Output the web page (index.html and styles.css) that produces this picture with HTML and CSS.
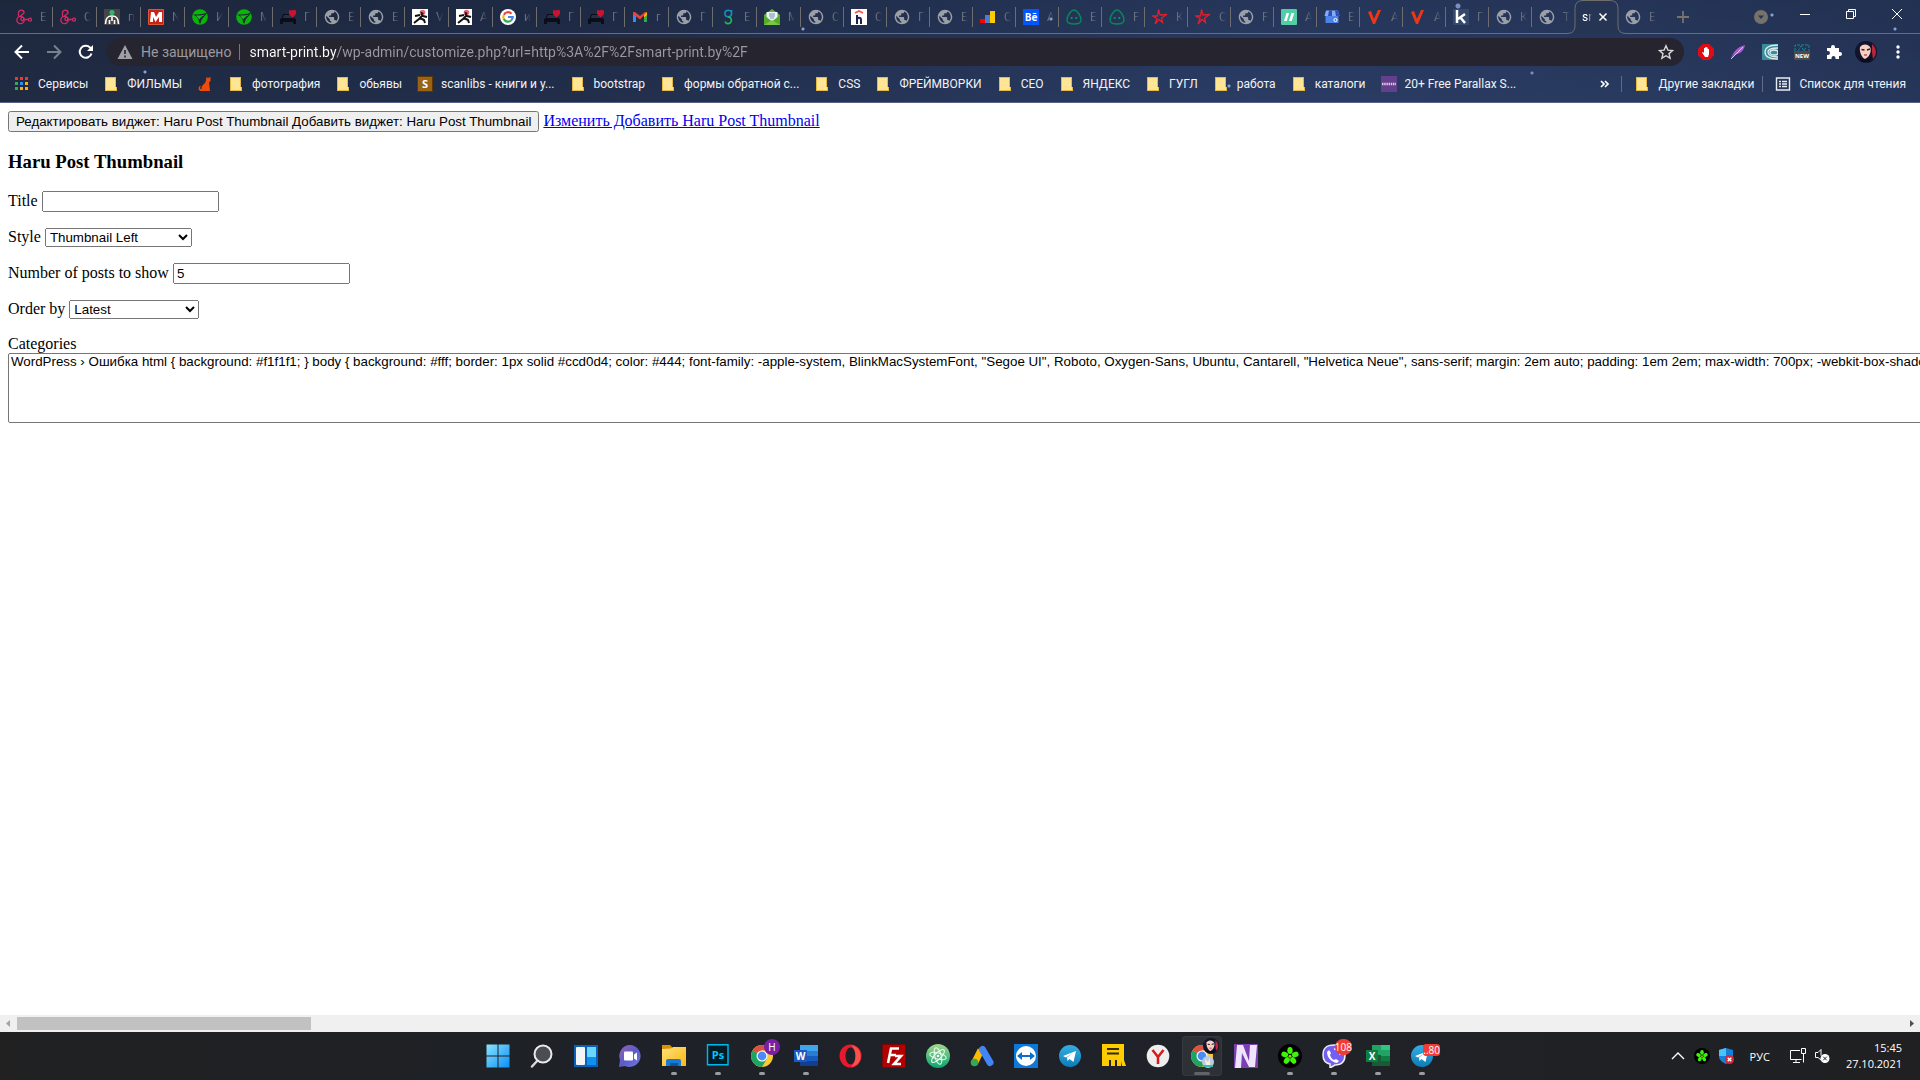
FILE: index.html
```html
<!DOCTYPE html>
<html lang="ru">
<head>
    <meta charset="UTF-8">
    <meta name="viewport" content="width=device-width, initial-scale=1.0">
    <title>smart-print.by</title>
    <link rel="stylesheet" href="styles.css">
</head>
<body>
    <!-- Shared icons -->
    <svg class="defs" aria-hidden="true">
        <linearGradient id="win-g" x2="1" y2="1"><stop stop-color="#8be3ff"/><stop offset="1" stop-color="#0a8ff5"/></linearGradient>
        <linearGradient id="chat-g" x2="1" y2="1"><stop stop-color="#9565b0"/><stop offset=".5" stop-color="#5b5bc8"/><stop offset="1" stop-color="#6f7be8"/></linearGradient>
        <linearGradient id="fold-g" x2="1" y2="1"><stop stop-color="#ffe07a"/><stop offset="1" stop-color="#fcb814"/></linearGradient>
        <linearGradient id="tg-g" x2="0" y2="1"><stop stop-color="#37aee2"/><stop offset="1" stop-color="#0b7cb8"/></linearGradient>
        <linearGradient id="atom-g" x2="0" y2="1"><stop stop-color="#a3d68a"/><stop offset="1" stop-color="#0aa572"/></linearGradient>
        <symbol id="globe" viewBox="1 1 22 22"><path d="M12 2C6.480 2 2 6.480 2 12s4.480 10 10 10 10-4.480 10-10S17.520 2 12 2zm-1 17.930c-3.950-.49-7-3.850-7-7.930 0-.62.08-1.210.21-1.790L9 15v1c0 1.100.9 2 2 2v1.930zm6.900-2.540c-.26-.81-1-1.390-1.900-1.390h-1v-3c0-.55-.45-1-1-1H8v-2h2c.55 0 1-.45 1-1V7h2c1.100 0 2-.9 2-2v-.41c2.930 1.190 5 4.060 5 7.410 0 2.080-.8 3.970-2.100 5.390z" fill="#9ba0a8"/></symbol>
        <symbol id="key" viewBox="0 0 16 16"><g fill="none" stroke="#d12b63" stroke-width="1.3"><circle cx="4.500" cy="11" r="3.700"/><circle cx="6.500" cy="10" r="1.600"/><path d="M2.500 7.500V4a2.800 2.800 0 0 1 5.600 0L4 7.500M7 10.500h6"/><circle cx="14" cy="10.700" r="1.500"/></g></symbol>
        <symbol id="head" viewBox="0 0 16 16"><path fill="#454545" d="M0 0h16v16H0z"/><path d="M1.500 15c0-6 2-8 6.500-8s6.500 2 6.500 8M5.500 15v-4m5 4v-4M8 12V8" fill="none" stroke="#fff" stroke-width="1.600"/><circle cx="8" cy="3.500" r="2.500" fill="#2fb66a"/></symbol>
        <symbol id="letter-m" viewBox="0 0 16 16"><path fill="#c7231b" stroke="#e0542f" d="M.5.5h15v15H.5z"/><path d="M2 13h3V8l2.500 5L11 8v5h3V3h-3L8 8 6 3H3z" fill="#fff"/></symbol>
        <symbol id="leaf" viewBox="0 0 16 16"><circle cx="8" cy="8" r="7.800" fill="#0ab40a"/><path d="M1 5.500c5 0 9 0 14-2-2 5-5 4-6.500 11L7 14c0-4-1-6-6-8.500z" fill="#1d2a2e"/><path d="M4 6.500c4 0 6 0 9-1-3 2-4 2-5.500 5z" fill="#14c414"/></symbol>
        <symbol id="car" viewBox="0 0 16 16"><path d="M0 15v-5l2-1 1-4h9l2 4 2 1v5h-3v-2H3v2z" fill="#0c0e17"/><path d="M4 6h7l1 3H3z" fill="#24304c"/><path d="M9 1l2.500.6L14 .8l2 .7v3.500L12.500 9 9 5z" fill="#cb1230"/></symbol>
        <symbol id="ninja" viewBox="0 0 16 16"><path fill="#fff" d="M0 0h16v16H0z"/><circle cx="10.500" cy="3.500" r="2.800" fill="#f06472"/><path d="M8 2.500l4 1.500-2 1.500z" fill="#111"/><path d="M9 5l2 2 4 1M10 7L7 10l-5 4M8 9l4 2 1 3M8 6L3 7" fill="none" stroke="#111" stroke-width="2"/></symbol>
        <symbol id="google" viewBox="0 0 16 16"><circle cx="8" cy="8" r="8" fill="#fff"/><g fill="none" stroke-width="2.200"><path d="M11.500 4.700A4.700 4.700 0 0 0 3.900 5.800" stroke="#ea4335"/><path d="M3.900 5.700a4.700 4.700 0 0 0 0 4.600" stroke="#fbbc05"/><path d="M3.800 10.100a4.700 4.700 0 0 0 7.300 1.400" stroke="#34a853"/><path d="M8 8h4.700a4.600 4.600 0 0 1-1.600 3.500" stroke="#4285f4"/></g></symbol>
        <symbol id="gmail" viewBox="0 0 16 16"><path d="M1 13V4h3v9z" fill="#4285f4"/><path d="M12 13V4h3v9z" fill="#34a853"/><path d="M12 4l3-1v3l-3 2.500z" fill="#fbbc04"/><path d="M1 3l2 0 5 4 5-4h2L8 10.500 1 5z" fill="#ea4335"/></symbol>
        <symbol id="eight" viewBox="0 0 16 16"><g fill="none" stroke-width="1.600"><path d="M11.500 1v3.500A3.300 3.300 0 1 1 8.200 1.200q2 0 3.300 1.300" stroke="#1492c8"/><path d="M8 8a3.300 3.300 0 1 1-3 4.500" stroke="#1fbf4a"/></g></symbol>
        <symbol id="mail" viewBox="0 0 16 16"><path d="M0 6l8-6 8 6v10H0z" fill="#62b332"/><path d="M2.500 3h11v6L8 13 2.500 9z" fill="#eef3f5"/><path d="M5 5h6M5 7h6M6 9h4" stroke="#6d8fae"/><path d="M0 6l8 6.500L16 6v10H0z" fill="#55ab2c"/><path d="M0 16l8-5 8 5z" fill="#7cc640"/></symbol>
        <symbol id="hh" viewBox="0 0 16 16"><path fill="#fff" d="M0 0h16v16H0z"/><path d="M4 4l4-2 4 2" stroke="#ff4c4c" stroke-width="1.600" fill="none"/><path d="M6 6v9M6 11c0-3 4-3 4 0v4" stroke="#1b2450" stroke-width="2" fill="none"/></symbol>
        <symbol id="bars" viewBox="0 0 16 16"><path d="M0 10h5v4H0z" fill="#f00"/><path d="M5 6h5v8H5z" fill="#4c7ed0"/><path d="M10 2h5v12h-5z" fill="#fc0"/></symbol>
        <symbol id="alien" viewBox="0 0 16 16"><path d="M8 1C5 1 1 7 1 11c0 3 3 4 7 4s7-1 7-4C15 7 11 1 8 1z" fill="none" stroke="#08875a" stroke-width="1.400"/><circle cx="5.700" cy="9" r="1.100" fill="#0a9a66"/><circle cx="10.300" cy="9" r="1.100" fill="#0a9a66"/></symbol>
        <symbol id="star-red" viewBox="0 0 16 16"><path d="M1 7h4.500l1-6.500 1.500 5.500 7-.5-5.500 3.500 1 4.500-3.500-3L3 15l2-5.500z" fill="none" stroke="#e01f2d" stroke-width="1.300"/></symbol>
        <symbol id="slashes" viewBox="0 0 16 16"><rect width="16" height="16" rx="1" fill="#53cda4"/><path d="M3 12L5.500 4h2.700L5.700 12zM8 12l2.500-8h2.700l-2.500 8z" fill="#fff"/></symbol>
        <symbol id="shop" viewBox="0 0 16 16"><path d="M1.500 6h13v8h-13z" fill="#4d83e8"/><path d="M2 1.500h12L15.500 7h-15z" fill="#86aaf5"/><path d="M5 1.500h3V7H4zM11 1.500h3L15.500 7H12z" fill="#2850b8"/><circle cx="11.500" cy="11" r="1.600" fill="none" stroke="#fff"/></symbol>
        <symbol id="vee" viewBox="0 0 16 16"><path d="M1 3l3-1 3 8 4-9h3L8 15H6z" fill="#ee3616"/></symbol>
        <symbol id="letter-k" viewBox="0 0 16 16"><path fill="#35486e" d="M0 0h16v16H0z"/><path d="M4 1v13M12 5l-7 5M7 8l5 6" stroke="#fff" stroke-width="2.500"/></symbol>
        <symbol id="folder" viewBox="0 0 16 16"><path d="M2 1h11v10h1v4H2z" fill="#e5b943"/><path d="M3 2h9v9h1v3H3z" fill="#ffe594"/></symbol>
        <symbol id="flower" viewBox="0 0 24 24"><circle cx="12" cy="12" r="12" fill="#000"/><g fill="#3df50a"><ellipse cx="12" cy="6.600" rx="2.700" ry="3.500"/><ellipse cx="17.200" cy="10.500" rx="2.700" ry="3.500" transform="rotate(72 17.200 10.500)"/><ellipse cx="15.200" cy="16.500" rx="2.700" ry="3.500" transform="rotate(144 15.200 16.500)"/><ellipse cx="8.800" cy="16.500" rx="2.700" ry="3.500" transform="rotate(216 8.800 16.500)"/><ellipse cx="6.800" cy="10.500" rx="2.700" ry="3.500" transform="rotate(288 6.800 10.500)"/></g><circle cx="12" cy="12.200" r="1.500" fill="#8fd400"/></symbol>
        <symbol id="face" viewBox="0 0 22 22"><circle cx="11" cy="11" r="11" fill="#12132c"/><path d="M17 3c5 4 5 11 1 15l-1-7z" fill="#b8283a"/><path d="M5 6c3-4 9-3 10.500 1 1 5-2 9.500-5.500 11-3-1-6-7-5-12z" fill="#f6d0c0"/><path d="M6.500 8.500l3 .5M12 9l3-1" stroke="#2a1d38" stroke-width="1.500"/><path d="M9 14h3" stroke="#cf4a62" stroke-width="1.500"/><path d="M3 15c4 4 9 4 14 0l-2 6H7z" fill="#0b0c20"/></symbol>
        <symbol id="chrome" viewBox="0 0 24 24"><circle cx="12" cy="12" r="11" fill="#fbc934"/><path d="M12 12L2.500 6.500A11 11 0 0 1 21.500 6.500H12z" fill="#dd5144"/><path d="M2.500 6.500A11 11 0 0 0 12 23l5-8.500-5-2.500z" fill="#1da362"/><path d="M12 6.500h9.600L17 14.500z" fill="#fbc934"/><circle cx="12" cy="12" r="5.500" fill="#fff"/><circle cx="12" cy="12" r="4.400" fill="#4c8bf5"/></symbol>
        <symbol id="telegram" viewBox="0 0 24 24"><circle cx="12" cy="12" r="11" fill="url(#tg-g)"/><path d="M5 12l13-5-2.500 11-4-3-2 2-.5-3.500L15 9l-7 4.500z" fill="#fff"/></symbol>
    </svg>

    <!-- Browser -->
    <header class="browser">
        <div class="tabs">
            <button class="tab"><svg><use href="#key"/></svg><span>Е</span></button>
            <button class="tab"><svg><use href="#key"/></svg><span>С</span></button>
            <button class="tab"><svg><use href="#head"/></svg><span>п</span></button>
            <button class="tab"><svg><use href="#letter-m"/></svg><span>N</span></button>
            <button class="tab"><svg><use href="#leaf"/></svg><span>И</span></button>
            <button class="tab"><svg><use href="#leaf"/></svg><span>М</span></button>
            <button class="tab"><svg><use href="#car"/></svg><span>Г</span></button>
            <button class="tab"><svg><use href="#globe"/></svg><span>Е</span></button>
            <button class="tab"><svg><use href="#globe"/></svg><span>Е</span></button>
            <button class="tab"><svg><use href="#ninja"/></svg><span>V</span></button>
            <button class="tab"><svg><use href="#ninja"/></svg><span>А</span></button>
            <button class="tab"><svg><use href="#google"/></svg><span>и</span></button>
            <button class="tab"><svg><use href="#car"/></svg><span>Г</span></button>
            <button class="tab"><svg><use href="#car"/></svg><span>Г</span></button>
            <button class="tab"><svg><use href="#gmail"/></svg><span>г</span></button>
            <button class="tab"><svg><use href="#globe"/></svg><span>Г</span></button>
            <button class="tab"><svg><use href="#eight"/></svg><span>Е</span></button>
            <button class="tab"><svg><use href="#mail"/></svg><span>М</span></button>
            <button class="tab"><svg><use href="#globe"/></svg><span>О</span></button>
            <button class="tab"><svg><use href="#hh"/></svg><span>О</span></button>
            <button class="tab"><svg><use href="#globe"/></svg><span>Г</span></button>
            <button class="tab"><svg><use href="#globe"/></svg><span>Е</span></button>
            <button class="tab"><svg><use href="#bars"/></svg><span>О</span></button>
            <button class="tab"><svg viewBox="0 0 16 16"><path fill="#0057ff" d="M0 0h16v16H0z"/><text x="8" y="11.500" text-anchor="middle" class="mark" font-size="10" fill="#fff">Bē</text></svg><span>А</span></button>
            <button class="tab"><svg><use href="#alien"/></svg><span>Е</span></button>
            <button class="tab"><svg><use href="#alien"/></svg><span>F</span></button>
            <button class="tab"><svg><use href="#star-red"/></svg><span>К</span></button>
            <button class="tab"><svg><use href="#star-red"/></svg><span>О</span></button>
            <button class="tab"><svg><use href="#globe"/></svg><span>F</span></button>
            <button class="tab"><svg><use href="#slashes"/></svg><span>А</span></button>
            <button class="tab"><svg><use href="#shop"/></svg><span>Е</span></button>
            <button class="tab"><svg><use href="#vee"/></svg><span>А</span></button>
            <button class="tab"><svg><use href="#vee"/></svg><span>А</span></button>
            <button class="tab"><svg><use href="#letter-k"/></svg><span>Г</span></button>
            <button class="tab"><svg><use href="#globe"/></svg><span>К</span></button>
            <button class="tab"><svg><use href="#globe"/></svg><span>Т</span></button>
            <div class="tab active">
                <svg class="outline" viewBox="0 0 59 34"><path d="M0 34v-.5Q8 33.500 8 26V8.500Q8 .5 16 .5h27q8 0 8 8V26q0 7.500 8 7.500v.5z" fill="#263554"/><path d="M0 33.500q8 0 8-7.500V8.500Q8 .5 16 .5h27q8 0 8 8V26q0 7.500 8 7.500" fill="none" stroke="#6e6d6c"/></svg>
                <span>sr</span>
                <button class="close" aria-label="Закрыть вкладку"><svg viewBox="0 0 16 16"><path d="M4.500 4.500l7 7m0-7l-7 7" stroke="#fff" stroke-width="1.500"/></svg></button>
            </div>
            <button class="tab"><svg><use href="#globe"/></svg><span>Е</span></button>
            <div class="strip-end">
                <button class="new-tab" aria-label="Новая вкладка"><svg viewBox="0 0 16 16"><path d="M8 2v12M2 8h12" stroke="#77726b" stroke-width="1.800"/></svg></button>
                <button class="win search" aria-label="Поиск вкладок"><svg viewBox="0 0 16 16"><circle cx="8" cy="8" r="7" fill="#75716b"/><path d="M5 6.500h6l-3 3.500z" fill="#263554"/></svg></button>
                <button class="win" aria-label="Свернуть"><svg viewBox="0 0 16 16"><path d="M3 8.500h10" stroke="#fff"/></svg></button>
                <button class="win" aria-label="Восстановить"><svg viewBox="0 0 16 16"><path d="M3.500 5.500h7v7h-7zM5.500 5.500v-2h7v7h-2" fill="none" stroke="#fff"/></svg></button>
                <button class="win" aria-label="Закрыть"><svg viewBox="0 0 16 16"><path d="M3 3l10 10m0-10l-10 10" stroke="#fff"/></svg></button>
            </div>
        </div>

        <div class="toolbar">
            <button class="nav" aria-label="Назад"><svg viewBox="0 0 16 16"><path d="M15 8H2m6-6.500L1.500 8 8 14.500" fill="none" stroke="#fff" stroke-width="2"/></svg></button>
            <button class="nav" aria-label="Вперед"><svg viewBox="0 0 16 16"><path d="M1 8h13M8 1.500L14.500 8 8 14.500" fill="none" stroke="#7b8090" stroke-width="2"/></svg></button>
            <button class="nav" aria-label="Обновить"><svg viewBox="0 0 16 16"><path d="M13.500 9.500a6 6 0 1 1-1.500-6l2 2" fill="none" stroke="#fff" stroke-width="2"/><path d="M15 1v6H9z" fill="#fff"/></svg></button>
            <div class="omnibox">
                <svg viewBox="0 0 16 16"><path d="M8 1l7.500 14H.5z" fill="#a0a0a4"/><path d="M8 6v4m0 1.500v2" stroke="#25242f" stroke-width="1.600"/></svg>
                <label for="url">Не защищено</label>
                <input class="url" type="text" id="url" value="smart-print.by/wp-admin/customize.php?url=http%3A%2F%2Fsmart-print.by%2F">
                <button class="plain" aria-label="Добавить в закладки"><svg viewBox="0 0 16 16"><path d="M8 1.800l1.900 4.300 4.700.4L11 9.600l1.100 4.600L8 11.700l-4.100 2.500L5 9.600 1.400 6.500l4.700-.4z" fill="none" stroke="#d8d8da" stroke-width="1.400"/></svg></button>
            </div>
            <div class="extensions">
                <button class="plain" aria-label="Adblock"><svg viewBox="0 0 16 16"><path d="M4.700 0h6.600L16 4.700v6.600L11.300 16H4.700L0 11.300V4.700z" fill="#e30b13"/><path d="M4 8.500l1-.5 1 1V4h1.200V3h1.300v.5h1.200V5h1.300v5L10 13H7z" fill="#fff"/></svg></button>
                <button class="plain" aria-label="Перо"><svg viewBox="0 0 16 16"><path d="M1 15C3 8 7 3 15 1c-1 6-5 9-11 10z" fill="#a55fc9"/><path d="M1 15L13 3" stroke="#e6b9f2"/></svg></button>
                <button class="plain" aria-label="Спираль"><svg viewBox="0 0 16 16"><path fill="#3a8c99" d="M0 0h16v16H0z"/><g fill="none" stroke="#dcedf0" stroke-width="1.300"><path d="M16 1C7 1 3 4 3 8s4 7 13 7M16 4c-6 0-10 1-10 4s4 5 10 5"/><ellipse cx="12" cy="8.500" rx="4" ry="2.500"/></g></svg></button>
                <button class="plain" aria-label="New"><svg viewBox="0 0 16 16"><path d="M1 7V1h14v6M4 7l3-5 3 5 2-4" fill="none" stroke="#0e8c98" stroke-dasharray="3 1"/><path fill="#4b4b4b" d="M0 7h16v9H0z"/><text x="8" y="14" text-anchor="middle" class="mark" font-size="6" fill="#fff">NEW</text></svg></button>
                <button class="plain" aria-label="Расширения"><svg viewBox="0 0 16 16"><path d="M1 4h4V3a2 2 0 0 1 4 0v1h4v4h1a2 2 0 0 1 0 4h-1v3H9.500v-1a2 2 0 0 0-4 0v1H1v-4h1a2 2 0 0 0 0-4H1z" fill="#fff"/></svg></button>
                <button class="plain profile" aria-label="Профиль"><svg><use href="#face"/></svg></button>
                <button class="plain" aria-label="Меню"><svg viewBox="0 0 16 16"><g fill="#fff"><circle cx="8" cy="3" r="1.700"/><circle cx="8" cy="8" r="1.700"/><circle cx="8" cy="13" r="1.700"/></g></svg></button>
            </div>
        </div>

        <nav class="bookmarks">
            <a href="#"><svg viewBox="0 0 16 16"><path d="M1 1h3v3H1zM6 1h3v3H6zM11 1h3v3h-3z" fill="#f4362a"/><path d="M1 6h3v3H1zM1 11h3v3H1z" fill="#2fae55"/><path d="M6 6h3v3H6z" fill="#2b8cf5"/><path d="M11 6h3v3h-3zM6 11h3v3H6zM11 11h3v3h-3z" fill="#f9ac0a"/></svg><span>Сервисы</span></a>
            <a href="#"><svg><use href="#folder"/></svg><span>ФИЛЬМЫ</span></a>
            <a href="#" aria-label="Кошка"><svg viewBox="0 0 16 16"><path d="M9.500 1l1.500 1 2.500-1v4L12 6.500l1 8.500H4c-3 0-3-4-1-5l1 .5c-1.500 1-1.500 2.500.5 2.500C4.500 8 9 8 9 4z" fill="#ee4b0c"/></svg></a>
            <a href="#"><svg><use href="#folder"/></svg><span>фотография</span></a>
            <a href="#"><svg><use href="#folder"/></svg><span>обьявы</span></a>
            <a href="#"><svg viewBox="0 0 16 16"><path fill="#9a6314" stroke="#5d3507" d="M.5.5h15v15H.5z"/><text x="8" y="12" text-anchor="middle" class="mark" font-size="11" fill="#fff">S</text></svg><span>scanlibs - книги и у...</span></a>
            <a href="#"><svg><use href="#folder"/></svg><span>bootstrap</span></a>
            <a href="#"><svg><use href="#folder"/></svg><span>формы обратной с...</span></a>
            <a href="#"><svg><use href="#folder"/></svg><span>CSS</span></a>
            <a href="#"><svg><use href="#folder"/></svg><span>ФРЕЙМВОРКИ</span></a>
            <a href="#"><svg><use href="#folder"/></svg><span>СЕО</span></a>
            <a href="#"><svg><use href="#folder"/></svg><span>ЯНДЕКС</span></a>
            <a href="#"><svg><use href="#folder"/></svg><span>ГУГЛ</span></a>
            <a href="#"><svg><use href="#folder"/></svg><span>работа</span></a>
            <a href="#"><svg><use href="#folder"/></svg><span>каталоги</span></a>
            <a href="#"><svg viewBox="0 0 16 16"><path fill="#643f8c" d="M0 0h16v16H0z"/><path d="M1 8h14" stroke="#d9c8e8" stroke-width="2.500" stroke-dasharray="1.500 .7"/></svg><span>20+ Free Parallax S...</span></a>
            <div class="bookmarks-end">
                <button class="plain" aria-label="Ещё"><svg viewBox="0 0 16 16"><path d="M4 5l3 3-3 3m4-6l3 3-3 3" fill="none" stroke="#fff" stroke-width="1.700"/></svg></button>
                <a class="divided" href="#"><svg><use href="#folder"/></svg><span>Другие закладки</span></a>
                <a class="divided" href="#"><svg viewBox="0 0 16 16"><path d="M1.500 2h13v12h-13zM4 5.500h2m1 0h5M4 8h2m1 0h5m-8 2.500h2m1 0h5" fill="none" stroke="#e8eaee" stroke-width="1.400"/></svg><span>Список для чтения</span></a>
            </div>
        </nav>
    </header>

    <!-- Widget form -->
    <main class="page">
        <button type="button">Редактировать виджет: Haru Post Thumbnail Добавить виджет: Haru Post Thumbnail</button>
        <a href="#">Изменить Добавить Haru Post Thumbnail</a>
        <h3>Haru Post Thumbnail</h3>
        <form>
            <p>
                <label for="title">Title</label>
                <input type="text" id="title">
            </p>
            <p>
                <label for="style">Style</label>
                <select id="style" class="style-select">
                    <option>Thumbnail Left</option>
                </select>
            </p>
            <p>
                <label for="number">Number of posts to show</label>
                <input type="text" id="number" value="5">
            </p>
            <p>
                <label for="order">Order by</label>
                <select id="order" class="order-select">
                    <option>Latest</option>
                </select>
            </p>
            <p>
                <label for="categories">Categories</label><br>
                <select id="categories" class="categories" multiple size="4">
                    <option>WordPress › Ошибка html { background: #f1f1f1; } body { background: #fff; border: 1px solid #ccd0d4; color: #444; font-family: -apple-system, BlinkMacSystemFont, "Segoe UI", Roboto, Oxygen-Sans, Ubuntu, Cantarell, "Helvetica Neue", sans-serif; margin: 2em auto; padding: 1em 2em; max-width: 700px; -webkit-box-shadow: 0 1px 1px rgba(0, 0, 0, .04);</option>
                </select>
            </p>
        </form>
    </main>
    <div class="scrollbar">
        <svg viewBox="0 0 17 17"><path d="M10 5v7L6 8.500z" fill="#a3a3a3"/></svg>
        <div class="thumb"></div>
        <svg viewBox="0 0 17 17"><path d="M7 5v7l4-3.500z" fill="#505050"/></svg>
    </div>

    <!-- Taskbar -->
    <footer class="taskbar">
        <div class="apps">
            <button class="app" aria-label="Пуск"><svg viewBox="0 0 24 24"><path d="M.5.500h11v11H.5zM12.500.500h11v11h-11zM.5 12.500h11v11H.5zM12.500 12.500h11v11h-11z" fill="url(#win-g)"/></svg></button>
            <button class="app" aria-label="Поиск"><svg viewBox="0 0 24 24"><path d="M8 16l-6 6.500" stroke="#d5d7da" stroke-width="2.500" stroke-linecap="round"/><circle cx="13" cy="10" r="8.500" fill="#4a4d52" stroke="#e9eaec" stroke-width="2"/></svg></button>
            <button class="app" aria-label="Виджеты"><svg viewBox="0 0 24 24"><path fill="#0a61b8" d="M0 1h24v22H0z"/><rect x="2" y="3" width="9" height="18" rx="1" fill="#f2f4f6"/><path fill="#6ad7ff" d="M13 3h9v10h-9z"/><path fill="#0f90ef" d="M13 13h9v8h-9z"/></svg></button>
            <button class="app" aria-label="Чат"><svg viewBox="0 0 24 24"><path d="M12 1a11 11 0 1 1-5 21l-6 1 1-7A11 11 0 0 1 12 1z" fill="url(#chat-g)"/><rect x="6" y="7.500" width="9" height="9" rx="1" fill="#fff"/><path d="M16 10.500l3-2v8l-3-2z" fill="#fff"/></svg></button>
            <button class="app running" aria-label="Проводник"><svg viewBox="0 0 24 24"><path d="M0 1h8l2 2v4H0z" fill="#d99200"/><path d="M0 5l9-.5L11 3h13v19H0z" fill="url(#fold-g)"/><path d="M4 22v-5q0-2 2-2h11q2 0 2 2v5z" fill="#157bd3"/><path d="M8 22v-3h8v3z" fill="#0b559e"/></svg></button>
            <button class="app running" aria-label="Photoshop"><svg viewBox="0 0 24 24"><path d="M1.500.700h20.500v20H1.500z" fill="#001d26" stroke="#00b8f0" stroke-width="1.400"/><text x="12" y="14.500" text-anchor="middle" class="mark" font-size="11" fill="#00c8ff">Ps</text></svg></button>
            <button class="app running" aria-label="Chrome"><svg><use href="#chrome"/></svg><span class="badge purple">H</span></button>
            <button class="app running" aria-label="Word"><svg viewBox="0 0 24 24"><path fill="#41a5ee" d="M6 1h18v6H6z"/><path fill="#2b7cd3" d="M6 7h18v5H6z"/><path fill="#185abd" d="M6 12h18v5H6z"/><path fill="#103f91" d="M6 17h18v5H6z"/><path fill="#185abd" d="M0 6h13v12H0z"/><text x="6.500" y="15.500" text-anchor="middle" class="mark" font-size="10" fill="#fff">W</text></svg></button>
            <button class="app" aria-label="Opera"><svg viewBox="0 0 24 24"><ellipse cx="12.500" cy="12" rx="11" ry="11.500" fill="#e8182d"/><ellipse cx="12.500" cy="12" rx="5" ry="8.500" fill="#1e2127"/><path d="M13 1c13 2 13 20 0 22 6-5 6-17 0-22z" fill="#f4544d"/></svg></button>
            <button class="app" aria-label="FileZilla"><svg viewBox="0 0 24 24"><path fill="#b30000" stroke="#7d0000" stroke-dasharray="1 1" d="M.5.500h23v23H.5z"/><path d="M6 19L9 4.500h8M8 11h6M13 12h6l-7 8h7" fill="none" stroke="#fff" stroke-width="2.600"/></svg></button>
            <button class="app" aria-label="Atom"><svg viewBox="0 0 24 24"><circle cx="12" cy="12" r="12" fill="url(#atom-g)"/><g fill="none" stroke="#e8f8ef" stroke-width="1.100"><ellipse cx="12" cy="12" rx="8.500" ry="3.200" transform="rotate(15 12 12)"/><ellipse cx="12" cy="12" rx="8.500" ry="3.200" transform="rotate(75 12 12)"/><ellipse cx="12" cy="12" rx="8.500" ry="3.200" transform="rotate(135 12 12)"/></g><circle cx="12" cy="12" r="1.300" fill="#fff"/></svg></button>
            <button class="app" aria-label="Google Ads"><svg viewBox="0 0 24 24"><path d="M5 18l6-12" stroke="#fbbc04" stroke-width="7"/><path d="M12.500 5.500L20 18.500" stroke="#4285f4" stroke-width="7" stroke-linecap="round"/><circle cx="4.500" cy="18.500" r="3.800" fill="#34a853"/></svg></button>
            <button class="app" aria-label="TeamViewer"><svg viewBox="0 0 24 24"><path fill="#0c78d9" d="M0 0h24v24H0z"/><circle cx="12" cy="12" r="10" fill="#fff"/><path d="M3 12l5-4v3h8V8l5 4-5 4v-3H8v3z" fill="#0d6fc8"/></svg></button>
            <button class="app" aria-label="Telegram"><svg><use href="#telegram"/></svg></button>
            <button class="app" aria-label="Директ"><svg viewBox="0 0 24 24"><path d="M0 0h22v16l2 6h-4l-1-5v5h-4v-6h-2v6H9v-6H7v6H0z" fill="#fc0"/><path d="M5 5h12M5 9.500h12" stroke="#332b00" stroke-width="2"/></svg></button>
            <button class="app" aria-label="Яндекс"><svg viewBox="0 0 24 24"><circle cx="12" cy="12" r="11.300" fill="#eee"/><path d="M6.500 6l5.500 7 5.500-7M12 12v8" fill="none" stroke="#d41b1b" stroke-width="2.500"/></svg></button>
            <button class="app current" aria-label="Chrome"><svg><use href="#chrome"/></svg><svg class="mini"><use href="#face"/></svg><svg class="mini low" viewBox="0 0 14 14"><circle cx="7" cy="7" r="6" fill="#bccbe2"/><path d="M4 4l3 3 2-4v8H5z" fill="#f7efd8"/><path d="M2 11h10" stroke="#34beb4" stroke-width="2"/></svg></button>
            <button class="app" aria-label="N"><svg viewBox="0 0 24 24"><path fill="#7a3fb5" d="M0 0h24v24H0z"/><path d="M1 24L3 1h6l6 16 1-16h7l-2 22h-6L8 9 7 24z" fill="#eee4fb"/></svg></button>
            <button class="app running" aria-label="ICQ"><svg><use href="#flower"/></svg></button>
            <button class="app running" aria-label="Viber"><svg viewBox="0 0 24 24"><path d="M12 1c8 0 11 3 11 10s-3 10-10 10l-5 3v-4C3 19 1 16 1 11 1 4 4 1 12 1z" fill="#7360f2" stroke="#eee" stroke-width="1.500"/><path d="M7 6l2 3-1 2c1 3 2 4 4 5l2-1 3 2-2 2C9 18 5 13 5 8z" fill="#fff"/><path d="M12 5c4 0 6 2 6 6" fill="none" stroke="#fff" stroke-width="1.300"/></svg><span class="badge red">108</span></button>
            <button class="app running" aria-label="Excel"><svg viewBox="0 0 24 24"><path fill="#21a366" d="M6 1h9v10H6z"/><path fill="#33c481" d="M15 1h9v5h-9z"/><path fill="#21a366" d="M15 6h9v6h-9z"/><path fill="#107c41" d="M15 12h9v5h-9z"/><path fill="#185c37" d="M6 11h9v6h9v5H6z"/><path fill="#107c41" d="M0 6h12v12H0z"/><text x="6" y="15.500" text-anchor="middle" class="mark" font-size="10" fill="#fff">X</text></svg></button>
            <button class="app running" aria-label="Telegram"><svg><use href="#telegram"/></svg><span class="badge red square">..80</span></button>
        </div>
        <div class="tray">
            <button class="plain" aria-label="Показать скрытые значки"><svg viewBox="0 0 16 16"><path d="M2 11l6-6 6 6" fill="none" stroke="#fff" stroke-width="1.400"/></svg></button>
            <button class="plain" aria-label="ICQ"><svg><use href="#flower"/></svg></button>
            <button class="plain" aria-label="Защитник"><svg viewBox="0 0 16 16"><path d="M8 0l7 2v6c0 4-3 6-7 8-4-2-7-4-7-8V2z" fill="#1680d8"/><path d="M8 0v8H1V2z" fill="#48c4f8"/><circle cx="11.500" cy="11.500" r="4.500" fill="#d92632"/><path d="M9.700 9.700l3.600 3.600m0-3.600l-3.600 3.600" stroke="#fff" stroke-width="1.400"/></svg></button>
            <span class="lang">РУС</span>
            <button class="plain" aria-label="Сеть"><svg viewBox="0 0 16 16"><path d="M10 2.500H.5v9h11M6 12v2.500M3 14.500h7M11.500.500h4v5h-4zM13.500 5.500v9" fill="none" stroke="#fff"/></svg></button>
            <button class="plain" aria-label="Звук"><svg viewBox="0 0 16 16"><path d="M7 12L4 9.500H1.500v-5H4l3-3v6" fill="none" stroke="#fff"/><circle cx="11" cy="10.500" r="4.500" fill="#fff"/><path d="M9.200 8.700l3.600 3.600m0-3.600l-3.600 3.600" stroke="#222"/></svg></button>
            <div class="clock"><span>15:45</span><span>27.10.2021</span></div>
        </div>
    </footer>
</body>
</html>
```
FILE: styles.css
```css
/* General Styles */
* {
    box-sizing: border-box;
}
body {
    margin: 0;
    min-height: 100vh;
    display: flex;
    flex-direction: column;
    overflow: hidden;
    background: #fff;
    font-family: "Liberation Serif", serif;
    font-size: 16px;
    color: #000;
}
.defs {
    position: absolute;
    width: 0;
    height: 0;
}
.mark {
    font-family: "Open Sans", sans-serif;
    font-weight: bold;
}
.browser svg,
.tray svg {
    width: 16px;
    height: 16px;
    display: block;
    flex: none;
}
.browser button,
.taskbar button {
    background: none;
    border: 0;
    padding: 0;
    color: inherit;
    font: inherit;
}

/* Browser */
.browser {
    background:
        radial-gradient(circle at 145px 72px, #8ba0d0 1px, transparent 2px),
        radial-gradient(circle at 803px 29px, #8ba0d0 1px, transparent 2px),
        radial-gradient(circle at 1051px 19px, #8ba0d0 1px, transparent 2px),
        radial-gradient(circle at 1229px 86px, #8ba0d0 1px, transparent 2px),
        radial-gradient(circle at 1458px 6px, #7a8fc8 2px, transparent 3px),
        radial-gradient(circle at 1532px 73px, #7a8fc8 1px, transparent 2px),
        radial-gradient(circle at 1772px 15px, #8ba0d0 1px, transparent 2px),
        radial-gradient(circle at 1895px 29px, #8ba0d0 1px, transparent 2px),
        linear-gradient(rgba(0, 0, 0, 0.1), transparent),
        linear-gradient(90deg, #202b43, #212e4b 30%, #2a3c64 65%, #293a60 85%, #26365a);
    border-bottom: 1px solid #5a5f86;
    color: #fff;
    font-family: Roboto, sans-serif;
    font-size: 12px;
}
.tabs {
    display: flex;
    height: 34px;
    padding-left: 9px;
    background: linear-gradient(#6e6d6c, #6e6d6c) bottom / 100% 1px no-repeat;
}
.browser .tab {
    flex: 0 1 43px;
    display: flex;
    align-items: center;
    gap: 8px;
    padding: 0 0 0 7px;
    color: #7c818b;
    background: linear-gradient(#6e6d6c, #6e6d6c) right 7px / 1px 20px no-repeat;
}
.browser .tab:nth-child(-n+18) {
    flex-basis: 44px;
}
.browser .tab:nth-child(n+36) {
    background: none;
}
/* Titles fade out before the separator */
.tab span {
    -webkit-mask-image: linear-gradient(90deg, #000, transparent 7px);
    mask-image: linear-gradient(90deg, #000, transparent 7px);
}
.browser .active {
    position: relative;
    color: #fff;
    gap: 3px;
}
.active span {
    position: relative;
    -webkit-mask-image: linear-gradient(90deg, #000 5px, transparent 10px);
    mask-image: linear-gradient(90deg, #000 5px, transparent 10px);
}
.browser .outline {
    position: absolute;
    left: -8px;
    top: 0;
    width: 59px;
    height: 34px;
}
.close {
    position: relative;
}
.strip-end {
    flex: 1;
    display: flex;
    align-items: flex-start;
    padding: 6px 0 0 14px;
}
.new-tab {
    margin: 3px auto 0 0;
}
.strip-end .win {
    width: 46px;
    display: flex;
    justify-content: center;
}
.strip-end .search {
    width: 42px;
    margin-top: 3px;
}
.toolbar {
    display: flex;
    align-items: center;
    height: 36px;
    padding: 0 14px;
    gap: 16px;
}
.omnibox {
    flex: 1;
    display: flex;
    align-items: center;
    height: 28px;
    margin-left: -3px;
    padding: 0 10px;
    border-radius: 14px;
    background: #25242f;
    color: #9a9a9f;
    font-size: 14px;
}
.omnibox label {
    margin-left: 8px;
    padding-right: 8px;
    border-right: 1px solid #77777d;
    line-height: 16px;
}
/* Host is white, the rest of the address is grey */
.url {
    flex: 1;
    border: 0;
    padding: 0 0 0 9px;
    font: inherit;
    color: transparent;
    background: linear-gradient(90deg, #fff 97px, #9a9a9f 97px);
    -webkit-background-clip: text;
    background-clip: text;
}
.extensions {
    display: flex;
    align-items: center;
    gap: 16px;
    margin-left: -2px;
}
.browser .profile svg {
    width: 22px;
    height: 22px;
    margin: 0 -3px;
}
.bookmarks {
    display: flex;
    align-items: center;
    height: 32px;
    padding: 0 14px 4px;
    gap: 15px;
    white-space: nowrap;
}
.bookmarks a {
    display: flex;
    align-items: center;
    gap: 8px;
    color: #f1f2f5;
    text-decoration: none;
}
.bookmarks-end {
    flex: 1;
    display: flex;
    justify-content: flex-end;
    align-items: center;
    gap: 8px;
}
.bookmarks .divided {
    padding-left: 12px;
    border-left: 1px solid #616b84;
}

/* Widget form */
.page {
    flex: 1;
    padding: 8px;
    overflow: hidden;
}
.page button,
.page input,
.page select {
    font-family: "Liberation Sans", sans-serif;
    font-size: 13.333px;
}
.page a {
    color: #0000ee;
}
.page input {
    width: 177px;
    height: 21px;
}
.page select {
    height: 19px;
}
.page .style-select {
    width: 147px;
}
.page .order-select {
    width: 130px;
}
.page .categories {
    width: 680vw;
    height: 70px;
}
.scrollbar {
    display: flex;
    align-items: center;
    height: 17px;
    background: #f0f0f0;
}
.scrollbar svg {
    width: 17px;
    height: 17px;
}
.thumb {
    width: 294px;
    height: 13px;
    margin-right: auto;
    background: #c1c1c1;
}

/* Taskbar */
.taskbar {
    display: grid;
    grid-template-columns: 1fr auto 1fr;
    align-items: center;
    height: 48px;
    background: linear-gradient(90deg, #212122, #1e2127 30%, #1f2227 70%, #202022);
    color: #fff;
    font-family: "Open Sans", sans-serif;
    font-size: 11px;
}
.apps {
    grid-column: 2;
    display: flex;
    gap: 4px;
}
.taskbar .app {
    position: relative;
    width: 40px;
    height: 40px;
    display: flex;
    align-items: center;
    justify-content: center;
    border-radius: 4px;
}
.app svg {
    width: 24px;
    height: 24px;
}
.running::after,
.current::after {
    content: "";
    position: absolute;
    bottom: 1px;
    width: 6px;
    height: 3px;
    border-radius: 2px;
    background: #9b9da0;
}
.taskbar .current {
    background: #2d3035;
    box-shadow: 0 0 0 1px #36393e inset;
}
.current::after {
    width: 16px;
    background: #616366;
}
.current .mini {
    position: absolute;
    right: 3px;
    top: 2px;
    width: 16px;
    height: 16px;
}
.current .low {
    right: 7px;
    top: 19px;
    width: 14px;
    height: 14px;
}
.badge {
    position: absolute;
    top: 3px;
    right: 2px;
    height: 16px;
    border-radius: 8px;
    line-height: 16px;
    font-size: 10px;
}
.purple {
    width: 16px;
    background: #7b1fa2;
}
.red {
    background: #f33b35;
}
.square {
    top: 8px;
    height: 12px;
    line-height: 12px;
    border-radius: 3px;
}
.tray {
    display: flex;
    align-items: center;
    justify-content: flex-end;
    gap: 8px;
    padding-right: 18px;
}
.lang {
    margin: 0 12px 0 8px;
}
.clock {
    display: flex;
    flex-direction: column;
    text-align: right;
    line-height: 16px;
    margin-left: 8px;
}
```
